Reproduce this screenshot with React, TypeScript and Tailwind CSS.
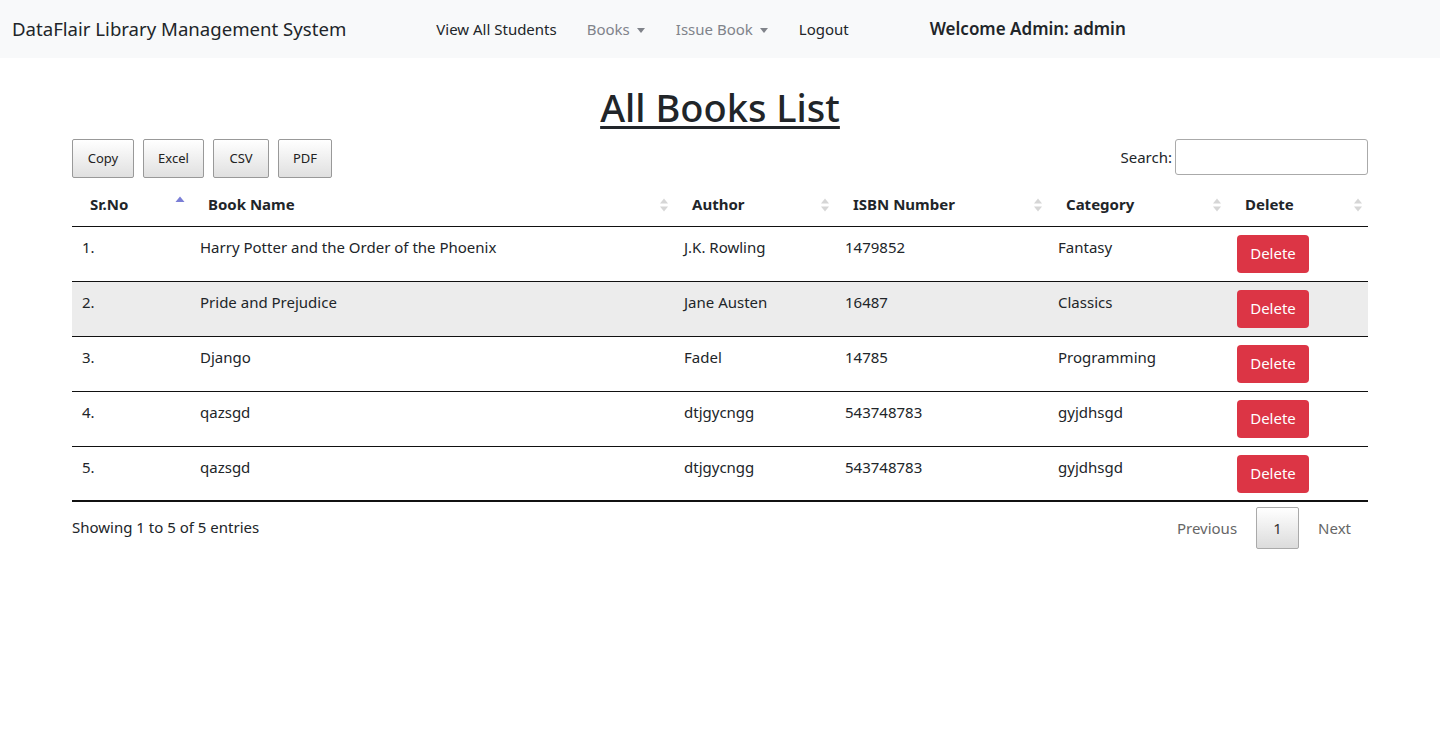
import React from "react";

type Book = { name: string; author: string; isbn: string; category: string };

const BOOKS: Book[] = [
  { name: "Harry Potter and the Order of the Phoenix", author: "J.K. Rowling", isbn: "1479852", category: "Fantasy" },
  { name: "Pride and Prejudice", author: "Jane Austen", isbn: "16487", category: "Classics" },
  { name: "Django", author: "Fadel", isbn: "14785", category: "Programming" },
  { name: "qazsgd", author: "dtjgycngg", isbn: "543748783", category: "gyjdhsgd" },
  { name: "qazsgd", author: "dtjgycngg", isbn: "543748783", category: "gyjdhsgd" },
];

const COLS = [
  { label: "Sr.No", w: "w-[118px]", asc: true },
  { label: "Book Name", w: "w-[484px]" },
  { label: "Author", w: "w-[161px]" },
  { label: "ISBN Number", w: "w-[213px]" },
  { label: "Category", w: "w-[179px]" },
  { label: "Delete", w: "w-[141px]" },
];

function SortIcon({ asc }: { asc?: boolean }) {
  return (
    <svg width="10" height="20" viewBox="0 0 10 20" className="absolute right-[5px] top-1/2 -translate-y-1/2">
      {asc ? (
        <path d="M0.5 7 L5 1.5 L9.5 7 Z" fill="#7a7ed6" />
      ) : (
        <>
          <path d="M1 8.5 L5 3.5 L9 8.5 Z" fill="#d6d6d6" />
          <path d="M1 11.5 L5 16.5 L9 11.5 Z" fill="#d6d6d6" />
        </>
      )}
    </svg>
  );
}

function Caret() {
  return <span className="ml-[7px] inline-block align-middle border-x-[4px] border-t-[5px] border-x-transparent border-t-current" />;
}

const btn =
  "h-[39px] rounded-[2px] border border-[#999] bg-gradient-to-b from-white to-[#e0e0e0] text-[13px] text-[#222]";

export default function App() {
  return (
    <div className="min-h-screen bg-white font-['Noto_Sans',sans-serif] text-[#212529]">
      <nav className="flex h-[58px] items-center bg-[#f8f9fa] px-[12px]">
        <span className="text-[18.6px] text-[#212529]">DataFlair Library Management System</span>
        <div className="ml-[90px] flex items-center text-[15px]">
          <a className="text-[#212529]">View All Students</a>
          <a className="ml-[30px] text-[#80838a]">
            Books
            <Caret />
          </a>
          <a className="ml-[31px] text-[#80838a]">
            Issue Book
            <Caret />
          </a>
          <a className="ml-[31px] text-[#212529]">Logout</a>
        </div>
        <span className="ml-[81px] text-[17px] font-semibold">Welcome Admin: admin</span>
      </nav>

      <main className="mx-auto w-[1296px]">
        <h1 className="mt-[26px] text-center text-[38px] font-medium leading-[46px] underline decoration-[3px] underline-offset-[4px]">
          All Books List
        </h1>

        <div className="mt-[9px] flex items-start justify-between">
          <div className="flex gap-[9px]">
            <button className={`${btn} w-[62px]`}>Copy</button>
            <button className={`${btn} w-[61px]`}>Excel</button>
            <button className={`${btn} w-[56px]`}>CSV</button>
            <button className={`${btn} w-[54px]`}>PDF</button>
          </div>
          <label className="flex items-center text-[15px]">
            Search:
            <input className="ml-[3px] h-[36px] w-[193px] rounded-[3px] border border-[#aaa] bg-white" />
          </label>
        </div>

        <table className="mt-[7px] w-full border-collapse text-[15px]">
          <thead>
            <tr className="border-b border-[#111]">
              {COLS.map((c) => (
                <th key={c.label} className={`relative ${c.w} h-[41px] pb-[2px] pl-[18px] text-left font-bold`}>
                  {c.label}
                  <SortIcon asc={c.asc} />
                </th>
              ))}
            </tr>
          </thead>
          <tbody>
            {BOOKS.map((b, i) => (
              <tr
                key={i}
                className={`h-[55px] align-top ${i === BOOKS.length - 1 ? "border-b-2 border-[#111]" : "border-b border-[#111]"} ${i === 1 ? "bg-[#ececec]" : ""}`}
              >
                <td className="px-[10px] pt-[9px]">{i + 1}.</td>
                <td className="px-[10px] pt-[9px]">{b.name}</td>
                <td className="px-[10px] pt-[9px]">{b.author}</td>
                <td className="px-[10px] pt-[9px]">{b.isbn}</td>
                <td className="px-[10px] pt-[9px]">{b.category}</td>
                <td className="px-[10px] pt-[8px]">
                  <button className="h-[38px] w-[72px] rounded-[4px] bg-[#dc3545] text-[15px] text-white">Delete</button>
                </td>
              </tr>
            ))}
          </tbody>
        </table>

        <div className="mt-[5px] flex items-start justify-between">
          <span className="pt-[9px] text-[15px]">Showing 1 to 5 of 5 entries</span>
          <div className="flex items-center text-[15px] text-[#666]">
            <span className="px-[12px]">Previous</span>
            <span className="mx-[7px] flex h-[42px] w-[43px] items-center justify-center rounded-[2px] border border-[#aaa] bg-gradient-to-b from-white to-[#dcdcdc] text-[#333]">
              1
            </span>
            <span className="px-[12px] pr-[17px]">Next</span>
          </div>
        </div>
      </main>
    </div>
  );
}
